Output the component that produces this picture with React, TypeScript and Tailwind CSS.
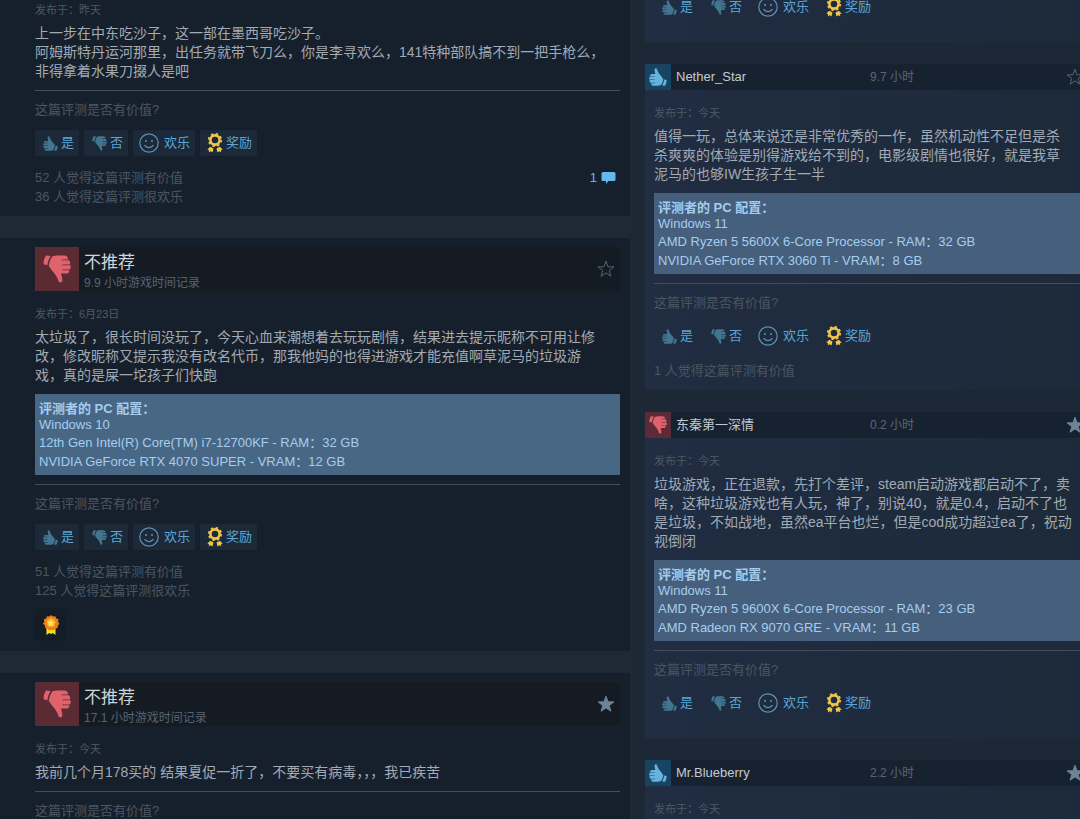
import React from 'react';

interface Review {
  id: number;
  recommended: boolean;
  author?: string;
  hours?: string;
  posted?: string;
  text?: string;
  specs?: string[];
  helpful?: number;
  funny?: number;
  comments?: number;
  awarded?: boolean;
  starred?: boolean;
}

const topReviews: Review[] = [
  {
    id: 1,
    recommended: false,
    posted: '昨天',
    text: '上一步在中东吃沙子，这一部在墨西哥吃沙子。\n阿姆斯特丹运河那里，出任务就带飞刀么，你是李寻欢么，141特种部队搞不到一把手枪么，\n非得拿着水果刀掇人是吧',
    helpful: 52,
    funny: 36,
    comments: 1,
  },
  {
    id: 2,
    recommended: false,
    hours: '9.9',
    posted: '6月23日',
    text: '太垃圾了，很长时间没玩了，今天心血来潮想着去玩玩剧情，结果进去提示昵称不可用让修\n改，修改昵称又提示我没有改名代币，那我他妈的也得进游戏才能充值啊草泥马的垃圾游\n戏，真的是屎一坨孩子们快跑',
    specs: ['Windows 10', '12th Gen Intel(R) Core(TM) i7-12700KF - RAM：32 GB', 'NVIDIA GeForce RTX 4070 SUPER - VRAM：12 GB'],
    helpful: 51,
    funny: 125,
    awarded: true,
  },
  {
    id: 3,
    recommended: false,
    hours: '17.1',
    posted: '今天',
    text: '我前几个月178买的 结果夏促一折了，不要买有病毒，，，我已疾苦',
    starred: true,
  },
];

const recentReviews: Review[] = [
  { id: 4, recommended: true },
  {
    id: 5,
    recommended: true,
    author: 'Nether_Star',
    hours: '9.7',
    posted: '今天',
    text: '值得一玩，总体来说还是非常优秀的一作，虽然机动性不足但是杀\n杀爽爽的体验是别得游戏给不到的，电影级剧情也很好，就是我草\n泥马的也够IW生孩子生一半',
    specs: ['Windows 11', 'AMD Ryzen 5 5600X 6-Core Processor - RAM：32 GB', 'NVIDIA GeForce RTX 3060 Ti - VRAM：8 GB'],
    helpful: 1,
  },
  {
    id: 6,
    recommended: false,
    author: '东秦第一深情',
    hours: '0.2',
    posted: '今天',
    text: '垃圾游戏，正在退款，先打个差评，steam启动游戏都启动不了，卖\n啥，这种垃圾游戏也有人玩，神了，别说40，就是0.4，启动不了也\n是垃圾，不如战地，虽然ea平台也烂，但是cod成功超过ea了，祝动\n视倒闭',
    specs: ['Windows 11', 'AMD Ryzen 5 9600X 6-Core Processor - RAM：23 GB', 'AMD Radeon RX 9070 GRE - VRAM：11 GB'],
    starred: true,
  },
  {
    id: 7,
    recommended: true,
    author: 'Mr.Blueberry',
    hours: '2.2',
    posted: '今天',
    starred: true,
  },
];

const Thumb: React.FC<{ up?: boolean; className: string }> = ({ up, className }) => (
  <svg viewBox="0 0 28 28" className={`shrink-0 ${className}`} aria-hidden="true">
    <g transform={up ? 'rotate(180 14 14)' : undefined} fill="currentColor">
      <path d="M3 .5 7.600.9C5.800 3.800 4.700 7 4.400 10.200L.6 9.200C.4 6 1.300 3 3 .5Z" />
      <path d="M9.200 1.500C11 .7 13 .5 15 .5h6.500c2.600 0 3.800 2 3.200 3.900h-6v.8h7.200c1.500 1.200 1.600 3 .7 4.200h-7.200v.8h7.900c.9 1.500.5 3.400-.8 4.200h-7v.8h6.800c.2 2-.9 3.300-2.800 3.300h-5.300c.3 2.400 1.300 5 1.100 7.300-.3 2.200-3.300 2.200-4 0-.8-3.600-3.300-7-5.500-9.300C8.500 14.800 7 12.500 5.800 11c.3-3.500 1.500-6.800 3.400-9.500Z" />
    </g>
  </svg>
);

const Smiley = () => (
  <svg viewBox="0 0 20 20" className="size-5 shrink-0 text-[#5f8fb3]" fill="none" stroke="currentColor" aria-hidden="true">
    <circle cx="10" cy="10" r="9.200" strokeWidth="1.200" />
    <circle cx="7" cy="8" r="1" fill="currentColor" stroke="none" />
    <circle cx="13" cy="8" r="1" fill="currentColor" stroke="none" />
    <path d="M5.500 12.200c2.200 3.200 6.800 3.200 9 0" strokeWidth="1.200" />
  </svg>
);

const Ribbon = () => (
  <svg viewBox="0 0 16 20" className="h-5 w-4 shrink-0 text-[#efc447]" fill="currentColor" aria-hidden="true">
    <circle cx="8" cy="7" r="4.600" fill="none" stroke="currentColor" strokeWidth="2.600" />
    <circle cx="8" cy="7" r="6.200" fill="none" stroke="currentColor" strokeWidth="1.800" strokeDasharray="2.430 2.430" />
    <path d="M3.200 13.800 6.500 15.500 5.500 19.500 3.800 18.300 1.800 19.300 2 17.300.4 16.500ZM12.800 13.800 9.500 15.500 10.500 19.500 12.200 18.300 14.200 19.300 14 17.300 15.600 16.500Z" />
  </svg>
);

const AwardBadge = () => (
  <svg viewBox="0 0 20 24" className="h-[22px] w-[18px]" aria-hidden="true">
    <path d="M5 14h10v9l-3-2-2 1-2-1-3 2Z" fill="#f5e21c" />
    <path d="m10 1 2.200 1.600 2.600-.4 1 2.500 2.500 1-.4 2.700 1.500 2.200-1.800 2-.2 2.700-2.600.7-1.700 2.200-2.600-.8-2.700.8-1.700-2.200-2.600-.7-.2-2.700L1 10.600l1.500-2.200-.4-2.700 2.500-1 1-2.500 2.600.4Z" fill="#ee7d17" />
    <circle cx="10" cy="9.500" r="5" fill="#fba72b" />
    <path d="m10 5 1.300 3 3.200.3-2.400 2.200.7 3.200L10 12l-2.800 1.700.7-3.200-2.400-2.200L8.700 8Z" fill="#ffe95c" />
  </svg>
);

const Star: React.FC<{ filled?: boolean }> = ({ filled }) => (
  <button aria-label="收藏" className="shrink-0">
    <svg viewBox="0 0 18 18" className={`size-[18px] ${filled ? 'text-[#6d8495]' : 'text-[#56636f]'}`} aria-hidden="true">
      <path
        d="m9 1.200 2 5.600 5.900.1-4.700 3.600 1.700 5.700L9 12.900l-4.900 3.300 1.700-5.700L1.100 6.900 7 6.800Z"
        fill={filled ? 'currentColor' : 'none'}
        stroke="currentColor"
      />
    </svg>
  </button>
);

const Votes: React.FC<{ flat?: boolean }> = ({ flat }) => {
  const box = `flex h-[26px] items-center rounded-xs pr-[5px] ${flat ? '' : 'bg-[#1b2939]'}`;
  return (
    <div className="mt-[10px] flex gap-[5px] text-[13px] text-[#5ba6d6]">
      <button className={`${box} gap-[3px] pl-2`}>
        <Thumb up className="size-[15px] text-[#42758f]" />是
      </button>
      <button className={`${box} gap-[3px] pl-2`}>
        <Thumb className="size-[15px] text-[#42758f]" />否
      </button>
      <button className={`${box} gap-[5px] pl-[6px]`}>
        <Smiley />欢乐
      </button>
      <button className={`${box} gap-[3px] pl-[7px]`}>
        <Ribbon />奖励
      </button>
    </div>
  );
};

const ReviewBody: React.FC<{ review: Review; flat?: boolean }> = ({ review, flat }) => (
  <>
    {review.posted && <p className="text-[11px] leading-4 text-[#4e5865]">发布于：{review.posted}</p>}
    {review.text && <p className="mt-[6px] text-sm leading-[19px] whitespace-pre text-[#a2aab4]">{review.text}</p>}
    {review.specs && (
      <div
        className={`mt-[9px] px-1 pt-[7px] pb-1 text-[13px] whitespace-nowrap text-[#a5cdef] ${
          flat ? 'bg-[#465f7c]' : 'bg-[#486785]'
        }`}
      >
        <p className="leading-4 font-bold">评测者的 PC 配置：</p>
        <p className="leading-4">{review.specs[0]}</p>
        <p className="leading-[19px]">{review.specs[1]}</p>
        <p className="leading-[19px]">{review.specs[2]}</p>
      </div>
    )}
    {(review.text || !review.posted) && (
      <>
        <hr className="mt-[9px] border-[#414e5b]" />
        <p className="mt-[9px] text-[13px] leading-5 text-[#4b5663]">这篇评测是否有价值?</p>
        <Votes flat={flat} />
      </>
    )}
    {review.helpful && (
      <div className="mt-3 flex items-start justify-between text-[13px] leading-[19px] text-[#4b5663]">
        <div>
          <p>{review.helpful} 人觉得这篇评测有价值</p>
          {review.funny && <p>{review.funny} 人觉得这篇评测很欢乐</p>}
        </div>
        {review.comments && (
          <a href="#comments" className="flex items-center gap-1 pr-1 text-[#66b8ec]">
            {review.comments}
            <svg viewBox="0 0 15 12" className="h-3 w-[15px]" fill="currentColor" aria-hidden="true">
              <path d="M2 0h11q1.500 0 1.500 1.500v6q0 1.500-1.500 1.500H7.500L5 12V9H2Q.5 9 .5 7.500v-6Q.5 0 2 0Z" />
            </svg>
          </a>
        )}
      </div>
    )}
    {review.awarded && (
      <div className="mt-[9px] flex size-8 items-center justify-center bg-[#141c26]">
        <AwardBadge />
      </div>
    )}
  </>
);

const TopReview: React.FC<{ review: Review }> = ({ review }) => (
  <article className="bg-[#16202c] pr-[10px] pb-[10px] pl-[35px]">
    {review.hours && (
      <header className="pt-[9px] pb-[15px]">
        <div className="flex items-center bg-[#141b23] pr-[5px]">
          <span className="flex size-11 shrink-0 items-center justify-center bg-[#5b2b34]">
            <Thumb className="size-7 text-[#df626c]" />
          </span>
          <div className="flex-1 pt-1 pl-[5px]">
            <h2 className="text-[17px] leading-6 text-[#d0d4d8]">不推荐</h2>
            <p className="text-xs leading-4 text-[#596370]">{review.hours} 小时游戏时间记录</p>
          </div>
          <Star filled={review.starred} />
        </div>
      </header>
    )}
    <ReviewBody review={review} />
  </article>
);

const RecentReview: React.FC<{ review: Review }> = ({ review }) => (
  <article className="bg-linear-to-r from-[#202d42] to-[#1d2a39]">
    {review.author && (
      <header className="flex h-[26px] items-center bg-[#172230] pr-3">
        <span className={`flex size-[26px] shrink-0 items-center justify-center ${review.recommended ? 'bg-[#184363]' : 'bg-[#5b2b38]'}`}>
          <Thumb up={review.recommended} className={`size-[18px] ${review.recommended ? 'text-[#66b3dd]' : 'text-[#df626c]'}`} />
        </span>
        <a href="#profile" className="flex-[192] pl-[5px] text-[13px] leading-5 text-[#c3cad2]">
          {review.author}
        </a>
        <p className="flex-[194] text-xs leading-5 text-[#5b6674]">{review.hours} 小时</p>
        <Star filled={review.starred} />
      </header>
    )}
    <div className={`pl-[9px] ${review.author ? 'pt-[15px]' : ''} ${review.helpful ? 'pb-[10px]' : 'pb-[22px]'}`}>
      <ReviewBody review={review} flat />
    </div>
  </article>
);

const ReviewsPage: React.FC = () => {
  return (
    <main className="grid h-screen grid-cols-[7fr_5fr] overflow-hidden bg-[#1d2836] font-['Liberation_Sans','Noto_Sans_CJK_SC',sans-serif]">
      {/* Reseñas más útiles */}
      <section className="flex flex-col gap-[22px] border-t-2 border-[#16202c] bg-[#1e2936]">
        {topReviews.map((review) => (
          <TopReview key={review.id} review={review} />
        ))}
      </section>

      {/* Reseñas recientes, la columna sigue más allá del borde */}
      <section className="-mt-[55px] -mr-4 ml-[15px] flex flex-col gap-[22px]">
        {recentReviews.map((review) => (
          <RecentReview key={review.id} review={review} />
        ))}
      </section>
    </main>
  );
};

export default ReviewsPage;
